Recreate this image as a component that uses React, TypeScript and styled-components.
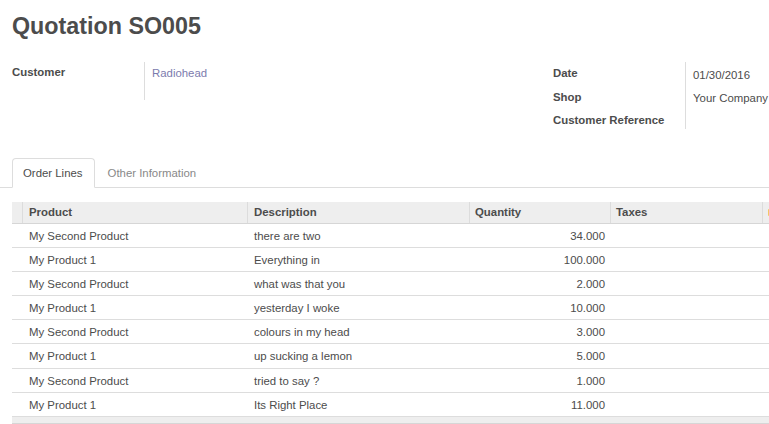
import React from "react";
import styled, { createGlobalStyle } from "styled-components";

const GlobalStyle = createGlobalStyle`
  html, body {
    margin: 0;
    padding: 0;
    background: #ffffff;
    overflow: hidden;
  }
  body {
    font-family: "Liberation Sans", Arial, sans-serif;
    font-size: 11.4px;
    color: #4c4c4c;
  }
`;

const Sheet = styled.div`
  padding: 13px 0 0 12px;
  width: 757px;
  overflow: hidden;
`;

const Title = styled.h1`
  margin: 0;
  font-size: 23.3px;
  line-height: 26px;
  font-weight: bold;
  color: #4c4c4c;
  white-space: nowrap;
`;

const Groups = styled.div`
  display: flex;
  align-items: flex-start;
  margin-top: 23px;
  width: 900px;
`;

const Group = styled.div<{ $width?: number }>`
  display: flex;
  flex-direction: column;
  width: ${(p) => (p.$width ? `${p.$width}px` : "auto")};
`;

const FieldRow = styled.div<{ $height: number }>`
  display: grid;
  grid-template-columns: 132px 1fr;
  height: ${(p) => p.$height}px;
`;

const Label = styled.div<{ $top: number }>`
  font-weight: bold;
  line-height: 16px;
  padding-top: ${(p) => p.$top}px;
  white-space: nowrap;
`;

const Value = styled.div<{ $top: number }>`
  border-left: 1px solid #dddddd;
  padding-left: 7px;
  line-height: 16px;
  padding-top: ${(p) => p.$top}px;
  white-space: nowrap;
`;

const Link = styled.a`
  color: #7c7bad;
  text-decoration: none;
`;

const TabBar = styled.div`
  display: flex;
  margin: 29px 0 0 -12px;
  padding-left: 12px;
  border-bottom: 1px solid #dddddd;
  width: 900px;
`;

const Tab = styled.div<{ $active?: boolean }>`
  line-height: 16px;
  padding: 6px 11px 6px 10px;
  margin-right: 2px;
  margin-bottom: -1px;
  border: 1px solid ${(p) => (p.$active ? "#dddddd" : "transparent")};
  border-bottom-color: ${(p) => (p.$active ? "#ffffff" : "transparent")};
  border-radius: 4px 4px 0 0;
  background: ${(p) => (p.$active ? "#ffffff" : "transparent")};
  color: ${(p) => (p.$active ? "#4c4c4c" : "#888888")};
  white-space: nowrap;
`;

const Table = styled.div`
  margin-top: 14px;
  width: 900px;
`;

const columns = "10px 225px 222px 141px 152px 150px";

const HeadRow = styled.div`
  display: grid;
  grid-template-columns: ${columns};
  background: #eeeeee;
  border-bottom: 1px solid #d6d6d6;
`;

const HeadCell = styled.div<{ $first?: boolean }>`
  display: flex;
  align-items: center;
  height: 21px;
  padding: 0 6px 1px 5px;
  box-sizing: border-box;
  border-left: ${(p) => (p.$first ? "none" : "1px solid #dcdcdc")};
  font-weight: bold;
  white-space: nowrap;
`;

const ProductHead = styled(HeadCell)`
  padding-left: 6px;
`;

const SortMark = styled.span`
  display: inline-block;
  width: 6px;
  height: 7px;
  background: #f3c766;
  border-radius: 1px;
`;

const BodyRow = styled.div<{ $tall?: boolean }>`
  display: grid;
  grid-template-columns: ${columns};
  border-bottom: 1px solid #dddddd;
  height: ${(p) => (p.$tall ? "24px" : "23px")};
`;

const Cell = styled.div<{ $num?: boolean }>`
  padding: 4px 6px 0 7px;
  line-height: 16px;
  text-align: ${(p) => (p.$num ? "right" : "left")};
  padding-right: ${(p) => (p.$num ? "5px" : "6px")};
  white-space: nowrap;
`;

const Footer = styled.div`
  height: 6px;
  background: #eeeeee;
  border-bottom: 1px solid #d6d6d6;
`;

const lines = [
  { product: "My Second Product", description: "there are two", qty: "34.000" },
  { product: "My Product 1", description: "Everything in", qty: "100.000" },
  { product: "My Second Product", description: "what was that you", qty: "2.000" },
  { product: "My Product 1", description: "yesterday I woke", qty: "10.000" },
  { product: "My Second Product", description: "colours in my head", qty: "3.000" },
  { product: "My Product 1", description: "up sucking a lemon", qty: "5.000" },
  { product: "My Second Product", description: "tried to say ?", qty: "1.000" },
  { product: "My Product 1", description: "Its Right Place", qty: "11.000" },
];

export default function App() {
  return (
    <>
      <GlobalStyle />
      <Sheet>
        <Title>Quotation SO005</Title>

        <Groups>
          <Group $width={541}>
            <FieldRow $height={38}>
              <Label $top={2}>Customer</Label>
              <Value $top={3}>
                <Link href="#">Radiohead</Link>
              </Value>
            </FieldRow>
          </Group>
          <Group>
            <FieldRow $height={23.5}>
              <Label $top={3}>Date</Label>
              <Value $top={5}>01/30/2016</Value>
            </FieldRow>
            <FieldRow $height={23.5}>
              <Label $top={3}>Shop</Label>
              <Value $top={4.5}>Your Company</Value>
            </FieldRow>
            <FieldRow $height={20}>
              <Label $top={3}>Customer Reference</Label>
              <Value $top={4}></Value>
            </FieldRow>
          </Group>
        </Groups>

        <TabBar>
          <Tab $active>Order Lines</Tab>
          <Tab>Other Information</Tab>
        </TabBar>

        <Table>
          <HeadRow>
            <HeadCell $first />
            <ProductHead>Product</ProductHead>
            <ProductHead>Description</ProductHead>
            <HeadCell>Quantity</HeadCell>
            <HeadCell>Taxes</HeadCell>
            <HeadCell>
              <SortMark />
            </HeadCell>
          </HeadRow>
          {lines.map((line, i) => (
            <BodyRow key={i} $tall={i === 5}>
              <Cell />
              <Cell>{line.product}</Cell>
              <Cell>{line.description}</Cell>
              <Cell $num>{line.qty}</Cell>
              <Cell />
              <Cell />
            </BodyRow>
          ))}
          <Footer />
        </Table>
      </Sheet>
    </>
  );
}
